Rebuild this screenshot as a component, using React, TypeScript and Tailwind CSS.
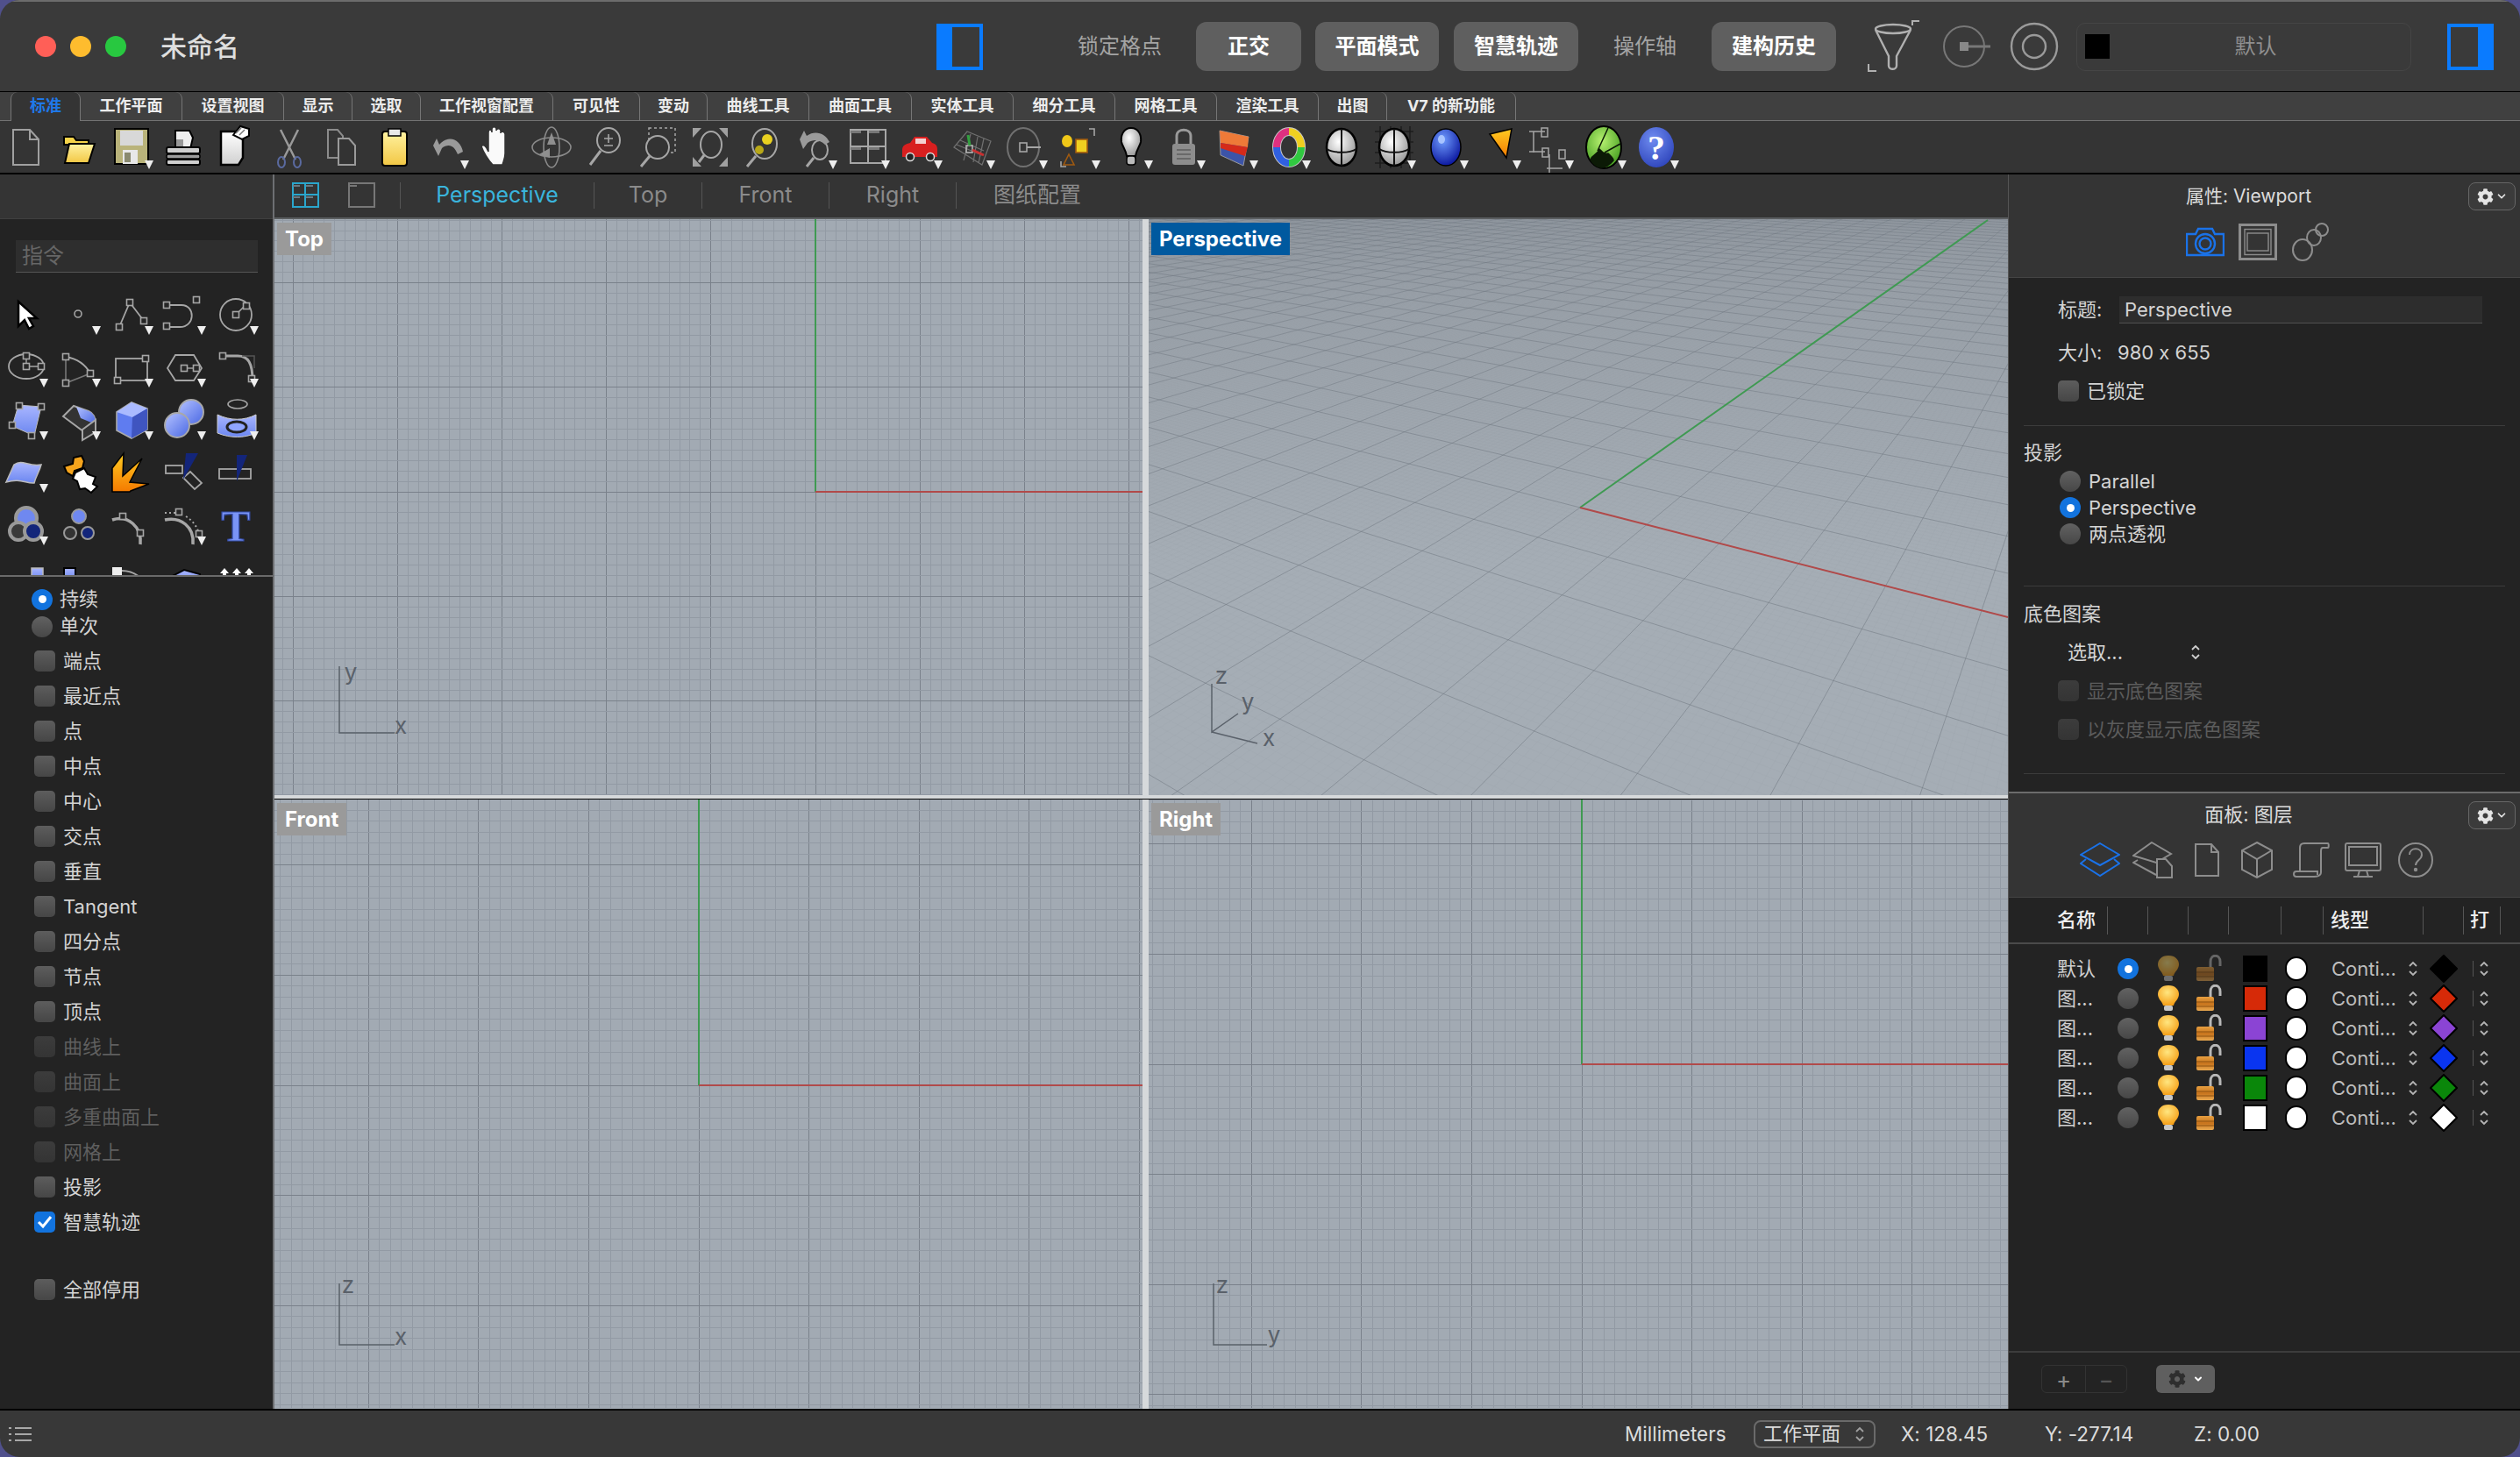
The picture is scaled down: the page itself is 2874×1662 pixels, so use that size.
import type { ReactNode } from "react";
import { FaCog } from "react-icons/fa";
import { ChevronDown } from "lucide-react";

const G = "#a6a6a6";

// ---------- small shared drawing helpers ----------
const Tri = () => <polygon points="45,45 55,45 50,55" fill="#eeeeee" />;

const Sq = ({ x, y, s = 7 }: { x: number; y: number; s?: number }) => (
  <rect x={x - s / 2} y={y - s / 2} width={s} height={s} fill="#262626" stroke={G} strokeWidth="1.6" />
);

const Cell = ({ children, tri }: { children?: ReactNode; tri?: boolean }) => (
  <svg width="60" height="60" viewBox="0 0 60 60" fill="none" className="shrink-0">
    {children}
    {tri && <Tri />}
  </svg>
);

const Defs = () => (
  <svg className="absolute w-0 h-0">
    <defs>
      <linearGradient id="gBlue" x1="0" y1="0" x2="1" y2="1">
        <stop offset="0" stopColor="#b4c2ff" />
        <stop offset="1" stopColor="#4a68e4" />
      </linearGradient>
      <linearGradient id="gFace" x1="0" y1="0" x2="0" y2="1">
        <stop offset="0" stopColor="#a9b6ff" />
        <stop offset="1" stopColor="#6b86f0" />
      </linearGradient>
      <linearGradient id="gOrange" x1="0" y1="0" x2="0" y2="1">
        <stop offset="0" stopColor="#ffcc22" />
        <stop offset="1" stopColor="#f47a00" />
      </linearGradient>
      <linearGradient id="gYellow" x1="0" y1="0" x2="0" y2="1">
        <stop offset="0" stopColor="#fff2a0" />
        <stop offset="1" stopColor="#f2c744" />
      </linearGradient>
      <linearGradient id="gLock" x1="0" y1="0" x2="0" y2="1">
        <stop offset="0" stopColor="#e8a040" />
        <stop offset="0.5" stopColor="#c8741c" />
        <stop offset="1" stopColor="#e8a850" />
      </linearGradient>
      <radialGradient id="gBulb" cx="0.45" cy="0.35" r="0.7">
        <stop offset="0" stopColor="#ffe680" />
        <stop offset="1" stopColor="#f59a10" />
      </radialGradient>
      <radialGradient id="gSphere" cx="0.4" cy="0.35" r="0.75">
        <stop offset="0" stopColor="#ffffff" />
        <stop offset="1" stopColor="#8c8c8c" />
      </radialGradient>
      <radialGradient id="gBall" cx="0.4" cy="0.3" r="0.75">
        <stop offset="0" stopColor="#6f9cff" />
        <stop offset="1" stopColor="#06109a" />
      </radialGradient>
      <radialGradient id="gHelp" cx="0.4" cy="0.3" r="0.8">
        <stop offset="0" stopColor="#6f8cf0" />
        <stop offset="1" stopColor="#2a40b8" />
      </radialGradient>
      <radialGradient id="gGlobe" cx="0.45" cy="0.35" r="0.7">
        <stop offset="0" stopColor="#b6f070" />
        <stop offset="1" stopColor="#3f9a1c" />
      </radialGradient>
      <linearGradient id="gPaper" x1="0" y1="0" x2="0" y2="1">
        <stop offset="0" stopColor="#ffffff" />
        <stop offset="1" stopColor="#d0d0d0" />
      </linearGradient>
    </defs>
  </svg>
);

// ---------- top toolbar icons, one per 60px cell ----------
const topIcons: ReactNode[] = [
  <Cell key="new"><path d="M15 10h19l10 11v29H15z M34 10v11h10" stroke="#a0a0a0" strokeWidth="2" /></Cell>,
  <Cell key="open">
    <path d="M13 18h11l3 4h14v5H13z" fill="#f5d34a" stroke="#000" strokeWidth="2" />
    <path d="M14 48l5-22h29l-7 22z" fill="url(#gYellow)" stroke="#000" strokeWidth="2" />
  </Cell>,
  <Cell key="save" tri>
    <rect x="11" y="9" width="38" height="40" fill="#b9b37a" stroke="#000" strokeWidth="2" />
    <rect x="17" y="11" width="26" height="17" fill="#d8d8d8" />
    <rect x="20" y="33" width="17" height="16" fill="#e8e8e8" />
    <rect x="22" y="36" width="7" height="11" fill="#8a8a70" />
  </Cell>,
  <Cell key="print">
    <path d="M20 28V11h16l4 8-3 13z" fill="#eeeeee" stroke="#000" strokeWidth="2" />
    <rect x="21" y="21" width="8" height="9" fill="#999" />
    <rect x="10" y="30" width="38" height="7" rx="2" fill="#cfcfcf" stroke="#000" strokeWidth="2" />
    <rect x="10" y="38" width="38" height="5" rx="2" fill="#9c9c9c" stroke="#000" strokeWidth="1.5" />
    <rect x="10" y="44" width="38" height="6" rx="2" fill="#cfcfcf" stroke="#000" strokeWidth="2" />
  </Cell>,
  <Cell key="paste-page">
    <path d="M12 12l25 0 0 30-5 8h-20z" fill="url(#gPaper)" stroke="#000" strokeWidth="2.5" />
    <path d="M26 16l8-10 10 3 0 8-8 4z" fill="#fff" stroke="#000" strokeWidth="2" />
    <path d="M29 14l6-6M33 16l6-6" stroke="#777" strokeWidth="1.5" />
  </Cell>,
  <Cell key="cut">
    <path d="M20 10l17 34M40 10L23 44" stroke="#9a9a9a" strokeWidth="2.5" />
    <ellipse cx="21" cy="47" rx="4" ry="6" stroke="#5a6aa0" strokeWidth="2" />
    <ellipse cx="39" cy="47" rx="4" ry="6" stroke="#5a6aa0" strokeWidth="2" />
  </Cell>,
  <Cell key="copy">
    <path d="M14 10h11l6 7v25H14z" stroke="#8c8c8c" strokeWidth="2" />
    <path d="M26 20h12l7 8v22H26z" fill="#333" stroke="#9a9a9a" strokeWidth="2" />
  </Cell>,
  <Cell key="clip">
    <rect x="16" y="12" width="28" height="39" rx="3" fill="url(#gYellow)" stroke="#000" strokeWidth="2" />
    <rect x="23" y="9" width="14" height="8" fill="#e8e8e8" stroke="#000" strokeWidth="1.5" />
  </Cell>,
  <Cell key="undo" tri>
    <path d="M14 28l6 12 4-9c8-6 14-3 18 7l6-3c-3-14-16-20-27-8l-3-7z" fill="#9a9a9a" />
  </Cell>,
  <Cell key="hand">
    <path d="M22 50c-5-5-11-15-13-21 2-3 5-1 8 6V13c0-4 4-4 4 0v-4c0-3 5-3 5 0v2c0-3 5-3 5 0v3c0-3 5-2 5 1v22c0 6-2 9-3 13z" fill="#fafafa" stroke="#333" strokeWidth="1.5" />
  </Cell>,
  <Cell key="rotate">
    <ellipse cx="29" cy="30" rx="22" ry="11" stroke="#8a8a8a" strokeWidth="1.6" />
    <ellipse cx="29" cy="30" rx="9" ry="23" stroke="#8a8a8a" strokeWidth="1.6" />
    <path d="M29 13l-5 14h10zM15 38l12-7v11z" fill="#8f8f8f" />
  </Cell>,
  <Cell key="zoom-in">
    <ellipse cx="34" cy="22" rx="13" ry="14" stroke={G} strokeWidth="2" />
    <path d="M25 34L13 50" stroke={G} strokeWidth="3" />
    <path d="M34 15v10M29 20h10M29 28h10" stroke={G} strokeWidth="1.6" />
  </Cell>,
  <Cell key="zoom-win">
    <rect x="20" y="8" width="30" height="28" stroke={G} strokeWidth="1.5" strokeDasharray="3 3" />
    <ellipse cx="30" cy="30" rx="13" ry="13" fill="#333" stroke={G} strokeWidth="2" />
    <path d="M21 40L11 52" stroke={G} strokeWidth="3" />
  </Cell>,
  <Cell key="zoom-ext">
    <ellipse cx="31" cy="27" rx="12" ry="15" stroke={G} strokeWidth="2" />
    <path d="M23 39L17 47" stroke={G} strokeWidth="3" />
    <path d="M10 8h10L10 19zM50 8H40l10 11zM10 52h10L10 41zM50 52H40l10-11z" fill="#a0a0a0" />
  </Cell>,
  <Cell key="zoom-sel">
    <ellipse cx="32" cy="26" rx="14" ry="17" stroke={G} strokeWidth="2" />
    <path d="M22 40L12 52" stroke={G} strokeWidth="3" />
    <circle cx="35" cy="21" r="6" fill="#e8d020" />
    <circle cx="26" cy="33" r="5" fill="#b8a818" />
  </Cell>,
  <Cell key="zoom-undo" tri>
    <ellipse cx="35" cy="33" rx="9" ry="11" stroke={G} strokeWidth="2" />
    <path d="M28 42L20 52" stroke={G} strokeWidth="3" />
    <path d="M12 21l4 11 5-7c8-5 14-3 20 2l5-3c-5-10-16-14-26-7l-3-6z" fill="#9a9a9a" />
  </Cell>,
  <Cell key="views" tri>
    <rect x="10" y="10" width="40" height="38" stroke={G} strokeWidth="2" />
    <path d="M30 10v38M10 29h40" stroke={G} strokeWidth="2" />
    <path d="M10 11h12v3H10zM31 11h12v3H31zM10 30h12v3H10zM31 30h12v3H31z" fill="#777" />
  </Cell>,
  <Cell key="car" tri>
    <path d="M9 33c0-5 4-7 9-8l5-7h14l6 7c4 1 6 3 6 8v8H9z" fill="#d81f1f" />
    <rect x="24" y="20" width="12" height="6" fill="#f4d0d0" />
    <circle cx="18" cy="41" r="4.5" fill="#222" stroke="#ddd" strokeWidth="1.5" />
    <circle cx="41" cy="41" r="4.5" fill="#222" stroke="#ddd" strokeWidth="1.5" />
  </Cell>,
  <Cell key="cplane" tri>
    <path d="M8 30L23 12 50 23 40 50z M15 22l27 12M11 27l29 12M27 15l-8 30M35 18L30 47M42 20l-6 28" stroke="#707070" strokeWidth="1.2" />
    <rect x="22" y="28" width="7" height="8" stroke="#bbb" strokeWidth="1.5" />
    <path d="M26 28l-2-12" stroke="#33a040" strokeWidth="3" />
    <path d="M29 33l13 6" stroke="#c83030" strokeWidth="3" />
  </Cell>,
  <Cell key="cpl-circle" tri>
    <ellipse cx="27" cy="30" rx="18" ry="22" stroke="#707070" strokeWidth="2" />
    <rect x="23" y="25" width="8" height="10" stroke={G} strokeWidth="1.6" />
    <path d="M31 30h16" stroke={G} strokeWidth="2" />
  </Cell>,
  <Cell key="select" tri>
    <path d="M42 9h6v8" stroke={G} strokeWidth="1.6" />
    <path d="M10 46v6h6" stroke={G} strokeWidth="1.6" />
    <ellipse cx="17" cy="23" rx="6" ry="7" fill="#f0c818" />
    <rect x="27" y="21" width="13" height="15" fill="#f0d020" stroke="#a05a10" strokeWidth="1.6" />
    <path d="M19 38l6 12H13z" stroke="#a05a10" strokeWidth="1.6" />
  </Cell>,
  <Cell key="bulb" tri>
    <path d="M30 8c-9 0-12 9-11 16 1 5 5 9 6 16h10c1-7 5-11 6-16 1-7-2-16-11-16z" fill="url(#gSphere)" stroke="#000" strokeWidth="2" />
    <rect x="25" y="40" width="10" height="10" rx="3" fill="#bbb" stroke="#000" strokeWidth="1.5" />
  </Cell>,
  <Cell key="lock" tri>
    <path d="M22 26V17c0-9 16-9 16 0v9" stroke="#9a9a9a" strokeWidth="3" />
    <rect x="17" y="26" width="26" height="24" rx="3" fill="#8d8d8d" />
    <path d="M22 33h16M22 38h16M22 43h16" stroke="#5e5e5e" strokeWidth="1.5" />
  </Cell>,
  <Cell key="layers" tri>
    <path d="M11 11l33 7-6 33-26-12z" fill="#3c54a8" stroke="#999" strokeWidth="1" />
    <path d="M11 11l33 7-1 12-31-5z" fill="#ee7a38" />
    <path d="M12 25l31 5-3 10-28-9z" fill="#d42a1a" />
  </Cell>,
  <Cell key="wheel" tri>
    <ellipse cx="30" cy="30" rx="14" ry="18" stroke="#c8c8c8" strokeWidth="10" />
    <path d="M30 12a14 18 0 0 1 14 18" stroke="#f0d020" strokeWidth="8" />
    <path d="M44 30a14 18 0 0 1-14 18" stroke="#30c840" strokeWidth="8" />
    <path d="M30 48a14 18 0 0 1-14-18" stroke="#3060e0" strokeWidth="8" />
    <path d="M16 30a14 18 0 0 1 14-18" stroke="#e03080" strokeWidth="8" />
  </Cell>,
  <Cell key="shade">
    <ellipse cx="30" cy="30" rx="17" ry="21" fill="url(#gSphere)" stroke="#000" strokeWidth="2.5" />
    <path d="M30 9v42M13 32c8 5 26 5 34 0" stroke="#111" strokeWidth="2" />
  </Cell>,
  <Cell key="shade-grid" tri>
    <path d="M8 12h44M8 24h44M8 36h44M8 48h44M14 6v48M26 6v48M38 6v48M48 6v48" stroke="#1c1c1c" strokeWidth="1.4" />
    <ellipse cx="30" cy="30" rx="17" ry="21" fill="url(#gSphere)" stroke="#000" strokeWidth="2.5" />
    <path d="M30 9v42M13 32c8 5 26 5 34 0" stroke="#111" strokeWidth="2" />
  </Cell>,
  <Cell key="render" tri>
    <ellipse cx="29" cy="30" rx="17" ry="21" fill="url(#gBall)" stroke="#000" strokeWidth="1.5" />
    <ellipse cx="24" cy="21" rx="4" ry="5" fill="#a8c4ff" />
  </Cell>,
  <Cell key="cone" tri>
    <path d="M19 15L44 9 38 42z" fill="url(#gOrange)" stroke="#000" strokeWidth="1.5" />
  </Cell>,
  <Cell key="dims" tri>
    <path d="M4 12h18M9 12v24M4 35h18M27 38v22M24 54h18" stroke={G} strokeWidth="1.5" />
    <rect x="18" y="8" width="7" height="10" stroke={G} strokeWidth="1.5" />
    <rect x="19" y="31" width="7" height="10" stroke={G} strokeWidth="1.5" />
    <rect x="38" y="33" width="7" height="10" stroke={G} strokeWidth="1.5" />
  </Cell>,
  <Cell key="globe" tri>
    <ellipse cx="29" cy="30" rx="20" ry="24" fill="url(#gGlobe)" stroke="#000" strokeWidth="2" />
    <path d="M14 44c2-6 8-5 10-12 3 3 5 6 10 5 3 3 6 5 6 8-5 6-11 8-14 8-5-1-9-4-12-9zM34 8L22 34M48 26L30 36" fill="#0c1a06" stroke="#0c1a06" strokeWidth="1.5" />
  </Cell>,
  <Cell key="help" tri>
    <ellipse cx="29" cy="30" rx="20" ry="23" fill="url(#gHelp)" />
    <text x="29" y="44" textAnchor="middle" fontSize="40" fontWeight="700" fill="#fff" fontFamily="Liberation Serif, serif">?</text>
  </Cell>,
];

// ---------- left tool palette icons ----------
const leftIcons: ReactNode[] = [
  <Cell key="arrow"><path d="M21 17v28l7-7 5 10 5-3-5-9h9z" fill="#fff" stroke="#000" strokeWidth="2.5" /></Cell>,
  <Cell key="pt" tri><circle cx="29" cy="31" r="4" stroke={G} strokeWidth="1.6" /></Cell>,
  <Cell key="poly" tri>
    <path d="M16 46L28 18 44 39" stroke={G} strokeWidth="1.8" />
    <Sq x={16} y={46} /><Sq x={28} y={18} /><Sq x={44} y={39} />
  </Cell>,
  <Cell key="crv" tri>
    <path d="M10 21h17c16 0 16 25-2 25H10" stroke={G} strokeWidth="1.8" />
    <Sq x={10} y={21} /><Sq x={10} y={45} /><Sq x={44} y={15} />
  </Cell>,
  <Cell key="circ" tri>
    <circle cx="29" cy="32" r="18" stroke={G} strokeWidth="1.8" />
    <path d="M29 32l11-11" stroke={G} strokeWidth="1.6" />
    <Sq x={29} y={32} /><Sq x={41} y={22} />
  </Cell>,
  <Cell key="ell" tri>
    <ellipse cx="30" cy="31" rx="20" ry="14" stroke={G} strokeWidth="1.8" />
    <path d="M30 18v13h14" stroke={G} strokeWidth="1.4" />
    <Sq x={30} y={19} /><Sq x={30} y={31} /><Sq x={47} y={31} />
  </Cell>,
  <Cell key="arc" tri>
    <path d="M15 20c12 2 22 8 28 19" stroke={G} strokeWidth="1.8" />
    <path d="M15 20v30l28-11" stroke="#777" strokeWidth="1.6" />
    <Sq x={15} y={20} /><Sq x={15} y={50} /><Sq x={43} y={39} />
  </Cell>,
  <Cell key="rect" tri>
    <rect x="12" y="22" width="36" height="25" stroke={G} strokeWidth="1.8" />
    <Sq x={14} y={47} /><Sq x={46} y={22} />
  </Cell>,
  <Cell key="hex" tri>
    <path d="M11 33l9-15h21l9 15-9 14H20z" stroke={G} strokeWidth="1.8" />
    <path d="M31 33h14" stroke={G} strokeWidth="1.4" />
    <Sq x={30} y={33} /><Sq x={44} y={33} />
  </Cell>,
  <Cell key="fillet" tri>
    <path d="M14 19h17c12 0 17 8 17 28" stroke={G} strokeWidth="3" />
    <path d="M36 19h14v14" stroke="#555" strokeWidth="1.5" />
    <Sq x={14} y={19} /><Sq x={47} y={45} />
  </Cell>,
  <Cell key="srf" tri>
    <path d="M21 15l26 2-8 33-25-11z" fill="url(#gFace)" stroke="#bbb" strokeWidth="1" />
    <Sq x={22} y={16} /><Sq x={47} y={17} /><Sq x={14} y={38} /><Sq x={36} y={50} />
  </Cell>,
  <Cell key="sweep" tri>
    <path d="M12 28l12-12 17 6c7 3 8 10 8 15l-14 8z" fill="#333" stroke={G} strokeWidth="2" />
    <path d="M27 17l14 5c7 3 8 10 8 15l-17-7z" fill="url(#gBlue)" />
    <path d="M34 43l15-11v14L34 55z" fill="#333" stroke={G} strokeWidth="2" />
  </Cell>,
  <Cell key="box" tri>
    <path d="M13 23l17-11 18 7v24L30 53 13 44z" fill="#5f7cf0" stroke="#aaa" strokeWidth="1.6" />
    <path d="M13 23l17-11 18 7-17 10z" fill="#aabaff" />
    <path d="M31 29l17-10v24L30 53z" fill="#3f55c0" />
  </Cell>,
  <Cell key="spheres" tri>
    <circle cx="38" cy="23" r="14" fill="url(#gBlue)" stroke="#a8a8a8" strokeWidth="2" />
    <circle cx="22" cy="38" r="14" fill="url(#gBlue)" stroke="#a8a8a8" strokeWidth="2" />
  </Cell>,
  <Cell key="hole" tri>
    <ellipse cx="31" cy="14" rx="11" ry="5" stroke={G} strokeWidth="1.6" />
    <path d="M8 26c15 7 30 7 44 0v21c-14 6-29 6-44 0z" fill="url(#gFace)" stroke="#ccc" strokeWidth="1" />
    <ellipse cx="30" cy="40" rx="11" ry="6" fill="#8fa4ff" stroke="#222" strokeWidth="3" />
  </Cell>,
  <Cell key="wave" tri>
    <path d="M16 23c10-7 16 3 31 0-2 8-6 13-8 21-9 1-16-6-32-1z" fill="url(#gFace)" stroke="#bbb" strokeWidth="1.5" />
  </Cell>,
  <Cell key="puzzle">
    <path d="M13 25l10-3 1-7 9-2 3 6-2 8-9 3-2 6-7-4z" fill="#f5a41c" stroke="#000" strokeWidth="2" />
    <path d="M26 32l10-5 4 7 9 3-3 8 5 3-7 7-7-5-6 1-3-9-5-3z" fill="#fff" stroke="#000" strokeWidth="2" />
  </Cell>,
  <Cell key="burst">
    <path d="M8 54V27l13-17-1 26 22-20-14 27 22 2-21 8-1 1z" fill="url(#gOrange)" stroke="#000" strokeWidth="1.5" />
  </Cell>,
  <Cell key="trim">
    <rect x="9" y="24" width="19" height="9" stroke={G} strokeWidth="1.8" />
    <path d="M29 38l8-7 13 13-8 7z" stroke={G} strokeWidth="1.8" />
    <path d="M32 10h14l-17 30z" fill="#13257a" />
  </Cell>,
  <Cell key="split">
    <rect x="10" y="28" width="36" height="11" stroke={G} strokeWidth="1.8" />
    <path d="M30 12h12L30 42z" fill="#13257a" />
  </Cell>,
  <Cell key="union" tri>
    <circle cx="30" cy="24" r="12" fill="#6f88f0" stroke="#999" strokeWidth="4" />
    <circle cx="21" cy="39" r="10" fill="#3a3a3a" stroke="#999" strokeWidth="4" />
    <circle cx="38" cy="39" r="10" fill="#13257a" stroke="#999" strokeWidth="4" />
  </Cell>,
  <Cell key="group">
    <circle cx="30" cy="22" r="8" fill="#6f88f0" stroke="#999" strokeWidth="2" />
    <circle cx="20" cy="41" r="7" fill="#333" stroke="#999" strokeWidth="2" />
    <circle cx="40" cy="41" r="7" fill="#13257a" stroke="#999" strokeWidth="2" />
  </Cell>,
  <Cell key="arc2">
    <path d="M8 26c18-6 34 8 32 28" stroke={G} strokeWidth="3.5" />
    <Sq x={20} y={22} /><Sq x={40} y={41} />
  </Cell>,
  <Cell key="offset" tri>
    <path d="M8 26c18-4 34 8 32 28" stroke={G} strokeWidth="3.5" />
    <path d="M8 18h14M32 22c8 5 13 12 15 20" stroke={G} strokeWidth="2" strokeDasharray="2 3" />
    <Sq x={24} y={17} /><Sq x={47} y={42} />
  </Cell>,
  <Cell key="T">
    <text x="29" y="50" textAnchor="middle" fontSize="50" fontWeight="700" fill="#7a94f5" stroke="#344ca8" strokeWidth="1.2" fontFamily="Liberation Serif, serif">T</text>
  </Cell>,
  <Cell key="m1">
    <path d="M13 39h14" stroke={G} strokeWidth="2" />
    <rect x="36" y="21" width="13" height="13" fill="url(#gFace)" stroke="#bbb" strokeWidth="1.5" />
  </Cell>,
  <Cell key="m2">
    <rect x="13" y="21" width="13" height="13" fill="url(#gFace)" stroke="#000" strokeWidth="2" />
    <rect x="37" y="32" width="13" height="13" fill="url(#gFace)" stroke="#000" strokeWidth="2" />
  </Cell>,
  <Cell key="m3">
    <rect x="8" y="20" width="11" height="20" fill="#eee" />
    <path d="M19 24c10 0 16 3 22 9" stroke={G} strokeWidth="2" />
    <path d="M40 32l8 6-8 4-6-4z" fill="#8d94b8" />
  </Cell>,
  <Cell key="m4">
    <path d="M13 32l17-9 18 5v14H13z" fill="url(#gFace)" stroke="#000" strokeWidth="2" />
  </Cell>,
  <Cell key="m5">
    <path d="M16 21l-5 6h3v8h4v-8h3zM30 21l-5 6h3v8h4v-8h3zM44 21l-5 6h3v8h4v-8h3z" fill="#fff" />
  </Cell>,
];

// ---------- title bar ----------
const PanelToggle = ({ side }: { side: "left" | "right" }) => (
  <div className={`w-[53px] h-[53px] shrink-0 border-[4px] border-[#0a7bff] flex ${side === "right" ? "justify-end" : ""}`}>
    <div className="w-[14px] h-full bg-[#0a7bff]" />
  </div>
);

const TitleToggle = ({ label, on, w }: { label: string; on?: boolean; w: string }) => (
  <div
    className={`${w} h-[56px] shrink-0 flex items-center justify-center text-[24px] rounded-[12px] ${
      on ? "bg-[#5f5f5f] text-white font-bold" : "text-[#a4a4a4]"
    }`}
  >
    {label}
  </div>
);

const TitleBar = () => (
  <div className="h-[104px] shrink-0 bg-[#3a3a3a] flex items-center pl-[40px] border-t-2 border-[#6c6c6c]">
    <div className="flex gap-4 shrink-0">
      <div className="w-6 h-6 rounded-full bg-[#ff5f57]" />
      <div className="w-6 h-6 rounded-full bg-[#febc2e]" />
      <div className="w-6 h-6 rounded-full bg-[#28c840]" />
    </div>
    <div className="ml-[39px] w-[90px] shrink-0 text-[30px] text-[#dedede] font-medium">未命名</div>
    <div className="ml-[795px]"><PanelToggle side="left" /></div>
    <div className="ml-[108px] w-[96px] shrink-0 text-[24px] text-[#a4a4a4]">锁定格点</div>
    <div className="ml-[39px]"><TitleToggle label="正交" on w="w-[120px]" /></div>
    <div className="ml-[16px]"><TitleToggle label="平面模式" on w="w-[141px]" /></div>
    <div className="ml-[17px]"><TitleToggle label="智慧轨迹" on w="w-[142px]" /></div>
    <div className="ml-[40px]"><TitleToggle label="操作轴" w="w-[72px]" /></div>
    <div className="ml-[40px]"><TitleToggle label="建构历史" on w="w-[142px]" /></div>
    {/* filter */}
    <svg className="ml-[36px] shrink-0" width="60" height="60" viewBox="0 0 60 60" fill="none" stroke="#b0b0b0" strokeWidth="2.4">
      <path d="M51 6V1h8M1 50v8h9" strokeWidth="2" />
      <ellipse cx="29" cy="10" rx="20" ry="5" />
      <path d="M9 11l15 30v11c0 5 9 5 9 0V41l16-30" />
    </svg>
    <svg className="ml-[26px] shrink-0" width="54" height="50" viewBox="0 0 54 50" fill="none" stroke="#777" strokeWidth="2">
      <circle cx="24" cy="25" r="23" />
      <rect x="19" y="20" width="10" height="10" fill="#888" stroke="none" />
      <path d="M29 25h25" strokeWidth="3" />
    </svg>
    <svg className="ml-[22px] shrink-0" width="56" height="56" viewBox="0 0 56 56" fill="none" stroke="#9a9a9a" strokeWidth="2.4">
      <circle cx="28" cy="28" r="26" />
      <circle cx="28" cy="28" r="13" />
    </svg>
    <div className="ml-[20px] w-[382px] h-[55px] shrink-0 rounded-[10px] border border-[#454545] flex items-center pl-[9px]">
      <div className="w-[28px] h-[28px] bg-black shrink-0" />
      <div className="flex-1 text-center text-[24px] text-[#8f8f8f] pr-[10px]">默认</div>
    </div>
    <div className="ml-[41px]"><PanelToggle side="right" /></div>
  </div>
);

// ---------- tabs ----------
const tabs = [
  { t: "标准", w: "w-[80px]" },
  { t: "工作平面", w: "w-[116px]" },
  { t: "设置视图", w: "w-[116px]" },
  { t: "显示", w: "w-[78px]" },
  { t: "选取", w: "w-[78px]" },
  { t: "工作视窗配置", w: "w-[151px]" },
  { t: "可见性", w: "w-[99px]" },
  { t: "变动", w: "w-[77px]" },
  { t: "曲线工具", w: "w-[116px]" },
  { t: "曲面工具", w: "w-[117px]" },
  { t: "实体工具", w: "w-[116px]" },
  { t: "细分工具", w: "w-[116px]" },
  { t: "网格工具", w: "w-[116px]" },
  { t: "渲染工具", w: "w-[116px]" },
  { t: "出图", w: "w-[78px]" },
  { t: "V7 的新功能", w: "w-[147px]" },
];

const TabBar = () => (
  <div className="h-[34px] shrink-0 bg-[#404040] border-t border-b border-t-black border-b-[#727272] flex pl-[12px]">
    {tabs.map((tab, i) => (
      <div
        key={tab.t}
        className={`${tab.w} h-[33px] pb-[3px] shrink-0 flex items-center justify-center text-[18px] font-bold border-r border-[#767676] rounded-tr-[8px] ${
          i === 0 ? "bg-[#343434] text-[#1f78e8] border-l rounded-tl-[8px]" : "text-[#ececec]"
        }`}
      >
        {tab.t}
      </div>
    ))}
  </div>
);

const Toolbar = () => (
  <div className="h-[61px] shrink-0 bg-[#343434] border-b-2 border-black flex items-center overflow-hidden">
    {topIcons}
  </div>
);

// ---------- form bits ----------
const Radio = ({ on }: { on?: boolean }) =>
  on ? (
    <div className="w-6 h-6 shrink-0 rounded-full bg-[#1273de] flex items-center justify-center">
      <div className="w-[9px] h-[9px] rounded-full bg-white" />
    </div>
  ) : (
    <div className="w-6 h-6 shrink-0 rounded-full bg-linear-to-b from-[#626262] to-[#474747]" />
  );

const Check = ({ on, dim }: { on?: boolean; dim?: boolean }) =>
  on ? (
    <div className="w-[24px] h-[24px] shrink-0 rounded-[5px] bg-[#1273de] flex items-center justify-center">
      <svg width="18" height="16" viewBox="0 0 18 16" fill="none" stroke="#fff" strokeWidth="3"><path d="M2 8l5 5 9-11" /></svg>
    </div>
  ) : (
    <div className={`w-[24px] h-[24px] shrink-0 rounded-[5px] bg-linear-to-b ${dim ? "from-[#3c3c3c] to-[#343434]" : "from-[#5d5d5d] to-[#464646]"}`} />
  );

const Updown = ({ c = "#b4b4b4" }: { c?: string }) => (
  <svg width="10" height="18" viewBox="0 0 10 18" fill="none" stroke={c} strokeWidth="1.8" className="shrink-0">
    <path d="M1 6l4-4 4 4M1 12l4 4 4-4" />
  </svg>
);

// ---------- left column ----------
const snaps = [
  { t: "端点" }, { t: "最近点" }, { t: "点" }, { t: "中点" }, { t: "中心" }, { t: "交点" }, { t: "垂直" },
  { t: "Tangent" }, { t: "四分点" }, { t: "节点" }, { t: "顶点" },
  { t: "曲线上", dim: true }, { t: "曲面上", dim: true }, { t: "多重曲面上", dim: true }, { t: "网格上", dim: true },
  { t: "投影" }, { t: "智慧轨迹", on: true },
];

const LeftColumn = () => (
  <div className="w-[313px] shrink-0 flex flex-col bg-[#232323] border-r-2 border-[#6d6f72]">
    <div className="h-[51px] shrink-0 bg-[#343434] border-b border-[#3f3f3f]" />
    <div className="h-[408px] shrink-0 overflow-hidden border-b-2 border-[#6a6a6a] pt-[24px]">
      <div className="ml-[18px] w-[276px] h-[37px] bg-[#2e2e2e] border-b border-[#555] pl-[7px] flex items-center text-[24px] text-[#666]">
        指令
      </div>
      <div className="grid grid-cols-[repeat(5,60px)] mt-[16px]">{leftIcons}</div>
    </div>
    <div className="flex-1 pt-[10px] pl-[36px] text-[22px] text-[#d4d4d4]">
      <div className="h-[31px] flex items-center gap-2"><Radio on />持续</div>
      <div className="h-[31px] flex items-center gap-2"><Radio />单次</div>
      <div className="mt-[4px] pl-[3px]">
        {snaps.map((s) => (
          <div key={s.t} className={`h-[40px] flex items-center gap-[9px] ${s.dim ? "text-[#5f5f5f]" : ""}`}>
            <Check on={s.on} dim={s.dim} />
            {s.t}
          </div>
        ))}
        <div className="h-[40px] mt-[37px] flex items-center gap-[9px]"><Check />全部停用</div>
      </div>
    </div>
  </div>
);

// ---------- viewports ----------
const range = (from: number, to: number, step: number) => {
  const out: number[] = [];
  for (let v = from; v <= to + 0.001; v += step) out.push(v);
  return out;
};

const FlatGrid = ({ w, h, ox, oy, major }: { w: number; h: number; ox: number; oy: number; major: number }) => {
  const minor = major / 10;
  const xs = range(((ox % minor) + minor) % minor, w, minor);
  const ys = range(((oy % minor) + minor) % minor, h, minor);
  const isMajor = (v: number, o: number) => {
    const n = (v - o) / major;
    return Math.abs(n - Math.round(n)) < 0.01;
  };
  return (
    <g shapeRendering="crispEdges">
      {xs.map((x) => (
        <line key={`x${x}`} x1={x} x2={x} y1={0} y2={h} stroke={isMajor(x, ox) ? "#7a818b" : "#929aa4"} strokeWidth="1" />
      ))}
      {ys.map((y) => (
        <line key={`y${y}`} y1={y} y2={y} x1={0} x2={w} stroke={isMajor(y, oy) ? "#7a818b" : "#929aa4"} strokeWidth="1" />
      ))}
    </g>
  );
};

const Label = ({ text, active }: { text: string; active?: boolean }) => (
  <div
    className={`absolute left-[3px] top-[4px] h-[37px] px-[9px] flex items-center text-[24px] font-bold text-white ${
      active ? "bg-[#00599f]" : "bg-[#9a9a9a]"
    }`}
  >
    {text}
  </div>
);

const AXIS = "#5a616a";
const GL = ({ lines, labels }: { lines: string; labels: [string, number, number][] }) => (
  <g>
    <path d={lines} stroke={AXIS} strokeWidth="1.5" fill="none" />
    {labels.map(([t, x, y]) => (
      <text key={t} x={x} y={y} fill={AXIS} fontSize="26" textAnchor="middle" fontFamily="Inter, sans-serif">{t}</text>
    ))}
  </g>
);

const FlatView = ({
  name, w, h, ox, oy, major, gizmo,
}: { name: string; w: number; h: number; ox: number; oy: number; major: number; gizmo: ReactNode }) => (
  <div className={`relative overflow-hidden bg-[#a2aab3] shrink-0 ${w === 990 ? "w-[990px]" : "w-[980px]"} h-full`}>
    <svg width={w} height={h} viewBox={`0 0 ${w} ${h}`} className="block">
      <FlatGrid w={w} h={h} ox={ox} oy={oy} major={major} />
      <path d={`M${ox} ${oy}V0`} stroke="#3f9a52" strokeWidth="2" />
      <path d={`M${ox} ${oy}H${w}`} stroke="#b14a4a" strokeWidth="2" />
      {gizmo}
    </svg>
    <Label text={name} />
  </div>
);

// two point perspective of the ground plane, measured off the picture
const O = [1802, 579];
const VX = [15, 121];
const VY = [2452, 121];
const A = -0.0408;
const B = 0.069;

const project = (X: number, Y: number) => {
  const w = A * X + B * Y + 1;
  return [(A * X * VX[0] + B * Y * VY[0] + O[0]) / w, (A * X * VX[1] + B * Y * VY[1] + O[1]) / w];
};

const PerspectiveGrid = () => {
  const xs = range(-360, 244, 1).map((n) => n / 10);
  const ys = range(-140, 380, 1).map((n) => n / 10);
  const draw = (vals: number[], pt: (v: number) => number[], vp: number[], key: string) =>
    vals.map((v) => {
      const p = pt(v);
      const ex = vp[0] + (p[0] - vp[0]) * 40;
      const ey = vp[1] + (p[1] - vp[1]) * 40;
      const major = Math.abs(v - Math.round(v)) < 0.001;
      return (
        <line
          key={key + v}
          x1={vp[0]} y1={vp[1]} x2={ex} y2={ey}
          stroke={major ? "#727982" : "#8c949d"}
          strokeWidth={major ? 0.9 : 0.5}
          opacity={major ? 0.6 : 0.16}
        />
      );
    });
  return (
    <g>
      {draw(xs, (x) => project(x, 0), VY, "x")}
      {draw(ys, (y) => project(0, y), VX, "y")}
    </g>
  );
};

const PerspectiveView = () => (
  <div className="relative overflow-hidden bg-linear-to-b from-[#979ea6] to-[#a5adb5] to-60% flex-1 h-full">
    <svg width="980" height="657" viewBox="1310 250 980 657" className="block">
      <PerspectiveGrid />
      <path d="M1802 579L2267 251" stroke="#3f9a52" strokeWidth="2" />
      <path d="M1802 579L2290 704" stroke="#b14a4a" strokeWidth="2" />
      <GL
        lines="M1382 780V835L1412 814M1382 835L1434 848"
        labels={[["z", 1393, 780], ["y", 1423, 810], ["x", 1447, 851]]}
      />
    </svg>
    <Label text="Perspective" active />
  </div>
);

const VBar = () => <div className="w-[7px] shrink-0 bg-[#d6d9db]" />;

const viewTabs = [
  { t: "Perspective", w: "w-[220px]", on: true },
  { t: "Top", w: "w-[122px]" },
  { t: "Front", w: "w-[144px]" },
  { t: "Right", w: "w-[144px]" },
  { t: "图纸配置", w: "w-[184px]" },
];

const Viewports = () => (
  <div className="flex-1 flex flex-col min-w-0">
    <div className="h-[51px] shrink-0 bg-[#343434] flex items-center pl-[20px] pb-[2px] border-b-2 border-[#5b5e60]">
      <svg width="32" height="30" viewBox="0 0 32 30" fill="none" stroke="#2aa6cc" strokeWidth="2" className="shrink-0">
        <rect x="1" y="1" width="29" height="27" />
        <path d="M15 1v27M1 14h29" />
        <path d="M1 4h8M16 4h8M1 17h8M16 17h8" strokeWidth="2" stroke="#6a7a82" />
      </svg>
      <svg width="32" height="30" viewBox="0 0 32 30" fill="none" stroke="#777" strokeWidth="2" className="ml-[32px] shrink-0">
        <rect x="1" y="1" width="29" height="27" />
        <path d="M1 4h9" />
      </svg>
      <div className="ml-[27px] w-px h-[30px] bg-[#555] shrink-0" />
      {viewTabs.map((v, i) => (
        <div key={v.t} className="flex items-center shrink-0">
          <div className={`${v.w} text-center text-[25px] ${v.on ? "text-[#3ab4dc]" : "text-[#8b8b8b]"}`}>{v.t}</div>
          {i < viewTabs.length - 1 && <div className="w-px h-[30px] bg-[#555]" />}
        </div>
      ))}
    </div>
    <div className="h-[657px] shrink-0 flex">
      <FlatView
        name="Top" w={990} h={657} ox={617} oy={311} major={119.2}
        gizmo={<GL lines="M74 510V586H137" labels={[["y", 87, 526], ["x", 144, 587]]} />}
      />
      <VBar />
      <PerspectiveView />
    </div>
    <div className="h-[5px] shrink-0 bg-[#d6d9db] border-b border-black" />
    <div className="flex-1 flex min-h-0">
      <FlatView
        name="Front" w={990} h={694} ox={484} oy={326} major={125.6}
        gizmo={<GL lines="M74 552V622H137" labels={[["z", 84, 563], ["x", 144, 622]]} />}
      />
      <VBar />
      <FlatView
        name="Right" w={980} h={694} ox={494} oy={302} major={125.6}
        gizmo={<GL lines="M74 552V622H135" labels={[["z", 84, 563], ["y", 143, 620]]} />}
      />
    </div>
  </div>
);

// ---------- right column ----------
const GearButton = () => (
  <div className="absolute right-[5px] top-[9px] w-[54px] h-[32px] rounded-[8px] border border-[#666] bg-[#3b3b3b] flex items-center justify-center gap-[2px] text-[#e4e4e4]">
    <FaCog size={19} />
    <ChevronDown size={14} strokeWidth={3} />
  </div>
);

const Sep = ({ mt }: { mt: string }) => <div className={`${mt} mx-[17px] h-px bg-[#3c3c3c] shrink-0`} />;

const Properties = () => (
  <div className="h-[706px] shrink-0 flex flex-col text-[22px] text-[#d4d4d4]">
    <div className="relative h-[118px] shrink-0 bg-[#343434] border-b border-[#444]">
      <div className="h-[50px] flex items-center justify-center pr-[36px] text-[21px] text-[#dcdcdc]">属性: Viewport</div>
      <GearButton />
      <div className="flex items-center pl-[202px] mt-[5px]">
        <svg width="44" height="34" viewBox="0 0 44 34" fill="none" stroke="#1a72e8" strokeWidth="2.4" className="shrink-0">
          <path d="M1 8h10l3-6h16l3 6h10v24H1z" />
          <circle cx="22" cy="19" r="11" />
          <circle cx="22" cy="19" r="6.5" />
        </svg>
        <svg width="44" height="42" viewBox="0 0 44 42" fill="none" stroke="#8d8d8d" className="ml-[16px] shrink-0">
          <rect x="1.5" y="1.5" width="41" height="39" strokeWidth="3" />
          <rect x="7" y="6.5" width="30" height="29" strokeWidth="1.4" />
          <rect x="10" y="11" width="24" height="20" strokeWidth="1.4" />
        </svg>
        <svg width="44" height="44" viewBox="0 0 44 44" fill="none" stroke="#8d8d8d" strokeWidth="2" className="ml-[16px] shrink-0">
          <ellipse cx="13" cy="31" rx="11" ry="12" />
          <ellipse cx="26" cy="17" rx="8" ry="9" />
          <ellipse cx="35" cy="8" rx="7" ry="7" />
        </svg>
      </div>
    </div>
    <div className="flex-1 flex flex-col bg-[#232323] min-h-0">
      <div className="mt-[21px] h-[31px] flex items-center pl-[56px] shrink-0">
        <div className="w-[70px]">标题:</div>
        <div className="w-[414px] h-[31px] bg-[#2d2d2d] border-b border-[#505050] pl-[6px] flex items-center">Perspective</div>
      </div>
      <div className="mt-[18px] h-[30px] flex items-center pl-[56px] shrink-0">
        <div className="w-[68px]">大小:</div>980 x 655
      </div>
      <div className="mt-[14px] h-[30px] flex items-center gap-[9px] pl-[56px] shrink-0"><Check />已锁定</div>
      <Sep mt="mt-[24px]" />
      <div className="mt-[15px] h-[30px] flex items-center pl-[17px] shrink-0">投影</div>
      <div className="mt-[3px] pl-[58px] shrink-0">
        <div className="h-[30px] flex items-center gap-[9px]"><Radio />Parallel</div>
        <div className="h-[30px] flex items-center gap-[9px]"><Radio on />Perspective</div>
        <div className="h-[30px] flex items-center gap-[9px]"><Radio />两点透视</div>
      </div>
      <Sep mt="mt-[44px]" />
      <div className="mt-[16px] h-[30px] flex items-center pl-[17px] shrink-0">底色图案</div>
      <div className="mt-[14px] h-[30px] flex items-center pl-[67px] shrink-0">
        <div className="w-[141px]">选取...</div>
        <Updown c="#cfcfcf" />
      </div>
      <div className="mt-[14px] h-[30px] flex items-center gap-[9px] pl-[56px] text-[#5c5c5c] shrink-0"><Check dim />显示底色图案</div>
      <div className="mt-[14px] h-[30px] flex items-center gap-[9px] pl-[56px] text-[#5c5c5c] shrink-0"><Check dim />以灰度显示底色图案</div>
      <Sep mt="mt-[35px]" />
    </div>
    <div className="h-[2px] bg-[#6c6c6c] shrink-0" />
  </div>
);

const LayerTabIcons = () => (
  <div className="flex items-center pl-[81px] mt-[7px]">
    <svg width="46" height="40" viewBox="0 0 46 40" fill="none" stroke="#1a72e8" strokeWidth="2" className="shrink-0">
      <path d="M23 1l22 13-22 12L1 14z" />
      <path d="M7 19L1 24l22 14 22-14-6-5" />
    </svg>
    <svg width="46" height="42" viewBox="0 0 46 42" fill="none" stroke="#8d8d8d" strokeWidth="2" className="ml-[14px] shrink-0">
      <path d="M22 1l22 13-17 10L1 16z" />
      <path d="M6 21l-5 3 26 14" />
      <path d="M28 20h10l7 8v13H28z" fill="#343434" />
    </svg>
    <svg width="28" height="38" viewBox="0 0 28 38" fill="none" stroke="#8d8d8d" strokeWidth="2" className="ml-[25px] shrink-0">
      <path d="M1 1h18l8 9v27H1zM19 1v9h8" />
    </svg>
    <svg width="36" height="42" viewBox="0 0 36 42" fill="none" stroke="#8d8d8d" strokeWidth="2" className="ml-[25px] shrink-0">
      <path d="M18 1l17 9v22L18 41 1 32V10z" />
      <path d="M1 10l17 10 17-10M18 20v21" />
    </svg>
    <svg width="42" height="40" viewBox="0 0 42 40" fill="none" stroke="#8d8d8d" strokeWidth="2" className="ml-[23px] shrink-0">
      <path d="M8 32V6c0-6 6-5 8-5h24c1 0 1 5 0 5h-6c-2 0-2 2-2 4v24c0 4-5 5-8 5H4c-4 0-4-6 0-6h24v4" />
    </svg>
    <svg width="42" height="40" viewBox="0 0 42 40" fill="none" stroke="#8d8d8d" strokeWidth="2" className="ml-[17px] shrink-0">
      <rect x="1" y="1" width="40" height="31" rx="2" />
      <rect x="5" y="5" width="32" height="21" />
      <path d="M17 32l-2 7M25 32l2 7M10 39h22" />
    </svg>
    <svg width="40" height="40" viewBox="0 0 40 40" fill="none" stroke="#8d8d8d" strokeWidth="2" className="ml-[19px] shrink-0">
      <circle cx="20" cy="20" r="19" />
      <path d="M13 14c0-9 14-9 14 0 0 6-7 6-7 12" />
      <circle cx="20" cy="31" r="1.2" fill="#8d8d8d" />
    </svg>
  </div>
);

const Bulb = ({ dim }: { dim?: boolean }) => (
  <svg width="26" height="32" viewBox="0 0 26 32" className={dim ? "opacity-45" : ""}>
    <path d="M13 1C5 1 1 6 1 11c0 6 5 8 6 13h12c1-5 6-7 6-13 0-5-4-10-12-10z" fill="url(#gBulb)" />
    <rect x="8" y="24" width="10" height="6" rx="2" fill="#c8c8c8" />
  </svg>
);

const Lock = ({ dim }: { dim?: boolean }) => (
  <svg width="30" height="32" viewBox="0 0 30 32" fill="none" className={dim ? "opacity-45" : ""}>
    <path d="M17 14V8c0-9 11-9 11 0v5" stroke="#b8b8b8" strokeWidth="3" />
    <rect x="1" y="14" width="20" height="16" rx="2" fill="url(#gLock)" />
    <path d="M1 20h20M1 25h20" stroke="#8a5010" strokeWidth="1" />
  </svg>
);

const layers = [
  { name: "默认", c: "#000000", on: true },
  { name: "图...", c: "#d62a08" },
  { name: "图...", c: "#8b44d4" },
  { name: "图...", c: "#0a35f0" },
  { name: "图...", c: "#0a870a" },
  { name: "图...", c: "#ffffff" },
];

const headCols = [
  { w: "w-[113px]", t: "名称", cls: "pl-[55px] text-[#eeeeee] font-medium" },
  { w: "w-[46px]" },
  { w: "w-[46px]" },
  { w: "w-[46px]" },
  { w: "w-[60px]" },
  { w: "w-[48px]" },
  { w: "w-[114px]", t: "线型", cls: "pl-[8px] text-[#eeeeee] font-medium" },
  { w: "w-[46px]" },
  { w: "w-[42px]", t: "打", cls: "pl-[7px] text-[#eeeeee] font-medium" },
];

const Layers = () => (
  <div className="flex-1 flex flex-col min-h-0 bg-[#232323]">
    <div className="relative h-[119px] shrink-0 bg-[#343434] border-b border-[#444]">
      <div className="h-[48px] flex items-center justify-center pr-[36px] text-[22px] text-[#dcdcdc]">面板: 图层</div>
      <GearButton />
      <LayerTabIcons />
    </div>
    <div className="h-[53px] shrink-0 flex items-center border-b-2 border-[#4a4a4a] text-[22px]">
      {headCols.map((c, i) => (
        <div key={i} className={`${c.w} h-[32px] border-r border-[#555] flex items-center shrink-0 ${c.cls ?? ""}`}>
          {c.t}
        </div>
      ))}
    </div>
    <div className="flex-1 pt-[11px] text-[22px] text-[#bdbdbd]">
      {layers.map((l) => (
        <div key={l.c} className="h-[34px] flex items-center pl-[55px]">
          <div className="w-[58px] shrink-0 text-[#d0d0d0]">{l.name}</div>
          <div className="w-[46px] shrink-0 flex justify-center"><Radio on={l.on} /></div>
          <div className="w-[46px] shrink-0 flex justify-center"><Bulb dim={l.on} /></div>
          <div className="w-[46px] shrink-0 flex justify-center"><Lock dim={l.on} /></div>
          <div className="w-[60px] shrink-0 flex justify-center">
            <svg width="28" height="30" viewBox="0 0 28 30"><rect x="1" y="1" width="26" height="28" fill={l.c} stroke="#000" strokeWidth="2" /></svg>
          </div>
          <div className="w-[34px] shrink-0 flex justify-center">
            <div className="w-[26px] h-[28px] rounded-full bg-white border-2 border-black" />
          </div>
          <div className="w-[106px] shrink-0 pl-[23px]">Conti...</div>
          <div className="w-[20px] shrink-0 flex justify-center"><Updown /></div>
          <div className="w-[50px] shrink-0 flex justify-center">
            <svg width="32" height="32" viewBox="0 0 32 32"><path d="M16 1l15 15-15 15L1 16z" fill={l.c} stroke="#000" strokeWidth="2" /></svg>
          </div>
          <div className="w-[9px] shrink-0 h-[18px] border-r border-[#555]" />
          <div className="ml-[7px] shrink-0"><Updown /></div>
        </div>
      ))}
    </div>
    <div className="h-[66px] shrink-0 border-t-2 border-[#3c3c3c] flex items-center pl-[37px] pb-[4px]">
      <div className="w-[98px] h-[32px] rounded-[6px] border border-[#333] flex text-[#8a8a8a]">
        <div className="w-[50px] flex items-center justify-center border-r border-[#333] text-[26px]">+</div>
        <div className="flex-1 flex items-center justify-center text-[26px] text-[#555]">−</div>
      </div>
      <div className="ml-[33px] w-[67px] h-[32px] rounded-[6px] bg-[#5f5f5f] flex items-center justify-center gap-[8px] text-[#2e2e2e]">
        <FaCog size={20} />
        <ChevronDown size={12} strokeWidth={4} className="text-white" />
      </div>
    </div>
  </div>
);

const StatusBar = () => (
  <div className="h-[55px] shrink-0 bg-[#383838] border-t-2 border-black flex items-center text-[22.5px] text-[#dcdcdc]">
    <svg width="26" height="18" viewBox="0 0 26 18" stroke="#a8a8a8" strokeWidth="2" className="ml-[10px] shrink-0">
      <path d="M0 2h3M7 2h19M0 9h3M7 9h19M0 16h3M7 16h19" />
    </svg>
    <div className="ml-[1817px] w-[147px] shrink-0">Millimeters</div>
    <div className="w-[139px] h-[32px] shrink-0 rounded-[8px] border-2 border-[#6a6a6a] flex items-center pl-[9px] text-[22px]">
      <div className="w-[105px]">工作平面</div>
      <Updown c="#a0a0a0" />
    </div>
    <div className="ml-[29px] w-[164px] shrink-0">X: 128.45</div>
    <div className="w-[170px] shrink-0">Y: -277.14</div>
    <div className="shrink-0">Z: 0.00</div>
  </div>
);

export default function App() {
  return (
    <div className="w-[2874px] h-[1662px] bg-[#50508c] overflow-hidden font-['Inter','Noto_Sans_CJK_SC',sans-serif] [font-feature-settings:'calt'_0]">
      <Defs />
      <div className="w-full h-full rounded-[22px] overflow-hidden flex flex-col">
        <TitleBar />
        <TabBar />
        <Toolbar />
        <div className="flex-1 flex min-h-0">
          <LeftColumn />
          <Viewports />
          <div className="w-[584px] shrink-0 flex flex-col border-l border-[#555]">
            <Properties />
            <Layers />
          </div>
        </div>
        <StatusBar />
      </div>
    </div>
  );
}
